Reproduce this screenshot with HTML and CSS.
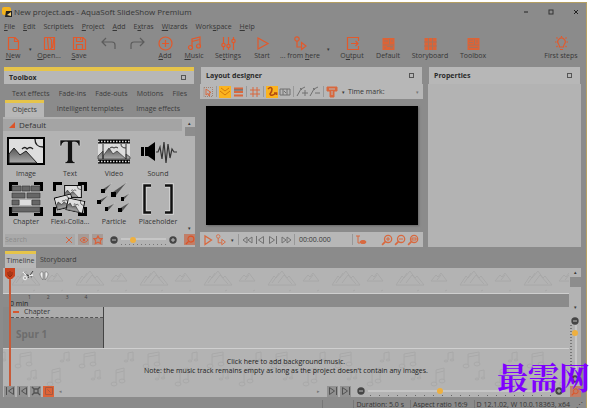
FILE: index.html
```html
<!DOCTYPE html>
<html lang="en">
<head>
<meta charset="utf-8">
<title>New project.ads - AquaSoft SlideShow Premium</title>
<link rel="stylesheet" href="styles.css">
</head>
<body>
<svg class="defs" width="0" height="0" aria-hidden="true">
  <defs>
    <linearGradient id="hill" x1="0" y1="0" x2="0" y2="1"><stop offset="0" stop-color="#555"/><stop offset="1" stop-color="#aaa"/></linearGradient>
    <pattern id="mountains" width="64" height="26" patternUnits="userSpaceOnUse" patternTransform="translate(8 0)">
      <g fill="none" stroke="#a8a8a8">
        <path d="M1 17L7 8L9 10L15 3L20 10L22 8L29 17ZM5 15L12 5M11 15L17 7L25 16"/>
        <path d="M36 13L41 7L43 9L46 5L52 13ZM42 12L46 7" />
        <path d="M22 23l2-1M50 23l2-1"/>
      </g>
    </pattern>
    <pattern id="notes" width="64" height="48" patternUnits="userSpaceOnUse" patternTransform="translate(8 0)">
      <g fill="none" stroke="#a8a8a8">
        <path d="M9 16V5L20 3V14M9 8L20 6"/><ellipse cx="7" cy="17" rx="3" ry="2"/><ellipse cx="18" cy="15" rx="3" ry="2"/>
        <path d="M53 11V4L58 3V10"/><ellipse cx="51" cy="12" rx="2" ry="1"/><ellipse cx="57" cy="11" rx="2" ry="1"/>
        <path d="M20 29V22L25 21V28"/><ellipse cx="18" cy="30" rx="2" ry="1"/><ellipse cx="24" cy="29" rx="2" ry="1"/>
        <path d="M41 34V21L49 19V31M41 24L49 22"/><ellipse cx="39" cy="35" rx="3" ry="2"/><ellipse cx="47" cy="32" rx="3" ry="2"/>
      </g>
    </pattern>
    <symbol id="photo" viewBox="0 0 38 28">
      <rect x="1" y="1" width="36" height="26" fill="#dedede" stroke="#000" stroke-width="2"/>
      <path d="M2 17L7 11L13 18L19 14L30 26H2Z" fill="url(#hill)" stroke="#222"/>
      <path d="M15 12q3-3 5 0q3-3 6 0M28 2q0 8 8 8" fill="none" stroke="#222" stroke-width="1.3"/>
    </symbol>
    <symbol id="corners" viewBox="0 0 34 34"><path d="M1.500 9V1.500H9M25 1.500H32.500V9M32.500 25V32.500H25M9 32.500H1.500V25" fill="none" stroke="#000" stroke-width="3"/></symbol>
    <symbol id="minus" viewBox="0 0 8 8"><circle cx="4" cy="4" r="3.700" fill="#454545"/><path d="M2 4H6" stroke="#bbb"/></symbol>
    <symbol id="plus" viewBox="0 0 8 8"><circle cx="4" cy="4" r="3.700" fill="#454545"/><path d="M2 4H6M4 2V6" stroke="#bbb"/></symbol>
    <symbol id="lens" viewBox="0 0 11 11"><circle cx="6.500" cy="4.500" r="3.300" fill="none" stroke="currentColor" stroke-width="1.200"/><path d="M4 7L1 10" stroke="currentColor" stroke-width="1.500"/></symbol>
    <symbol id="prev" viewBox="0 0 10 10"><path d="M1.500 1V9M8.500 1.500V8.500L3.500 5Z" fill="none" stroke="currentColor"/></symbol>
    <symbol id="next" viewBox="0 0 10 10"><path d="M8.500 1V9M1.500 1.500V8.500L6.500 5Z" fill="none" stroke="currentColor"/></symbol>
    <symbol id="branch" viewBox="0 0 15 15"><circle cx="4" cy="3" r="2.200" fill="none" stroke="currentColor"/><path d="M4 5V11H8M8.500 6.500V13.500L13 10Z" fill="none" stroke="currentColor" stroke-width="1.200"/></symbol>
  </defs>
</svg>

<div class="window">
  <header class="titlebar">
    <svg class="logo" viewBox="0 0 10 10"><rect width="9" height="8" rx="2" fill="#f4b31c"/><path d="M4 4H10V10H3Z" fill="#222"/><path d="M5 8L9 5V9Z" fill="#f4d27a"/></svg>
    <h1>New project.ads - AquaSoft SlideShow Premium</h1>
    <div class="wincontrols">
      <button aria-label="Minimize"><svg viewBox="0 0 8 8"><path d="M2 4H6" stroke="#222"/></svg></button>
      <button aria-label="Maximize"><svg viewBox="0 0 8 8"><rect x="2" y="2" width="4" height="4" fill="none" stroke="#333"/></svg></button>
      <button aria-label="Close"><svg viewBox="0 0 8 8"><path d="M2 2L6 6M6 2L2 6" stroke="#222"/></svg></button>
    </div>
  </header>

  <nav class="menu">
    <button><u>F</u>ile</button><button><u>E</u>dit</button><button>Scriptlets</button><button><u>P</u>roject</button><button><u>A</u>dd</button><button>E<u>x</u>tras</button><button><u>W</u>izards</button><button>Work<u>s</u>pace</button><button><u>H</u>elp</button>
  </nav>

  <div class="toolbar">
    <button><svg viewBox="0 0 15 15"><path d="M2.500 1.500H9L12.500 5V13.500H2.500ZM8.500 1.500V5.500H12.500"/></svg><span><u>N</u>ew</span></button>
    <button class="drop" aria-label="New options">▾</button>
    <button><svg viewBox="0 0 15 15"><path d="M2.500 1.500H12.500V13.500H9M2.500 1.500V13.500H8L9.500 12V4L7.500 1.500M5.500 2L6.500 13M12 2L10.500 12"/></svg><span><u>O</u>pen...</span></button>
    <button><svg viewBox="0 0 15 15"><path d="M1.500 1.500H11L13.500 4V13.500H1.500ZM4.500 1.500V5.500H10.500V1.500M4.500 13.500V8.500H10.500V13.500M8.500 2V4"/></svg><span><u>S</u>ave</span></button>
    <button class="grey" aria-label="Undo"><svg viewBox="0 0 15 15"><path d="M5 2L1 6L5 10M1 6H11Q14 6 14 9V13"/></svg><span></span></button>
    <button class="grey" aria-label="Redo"><svg viewBox="0 0 15 15"><path d="M10 2L14 6L10 10M14 6H4Q1 6 1 9V13"/></svg><span></span></button>
    <button><svg viewBox="0 0 15 15"><circle cx="7.500" cy="7.500" r="6.500"/><path d="M4 7.500H11M7.500 4V11"/></svg><span><u>A</u>dd</span></button>
    <button><svg viewBox="0 0 15 15"><path d="M5 11V3L13 1V9.500M5 5.500L13 3.500"/><circle cx="3.500" cy="11.500" r="2"/><circle cx="11.500" cy="10" r="2"/></svg><span><u>M</u>usic</span></button>
    <button><svg viewBox="0 0 15 15"><path d="M2.500 1V7M2.500 11V14M7.500 1V8M7.500 12V14M12.500 1V3M12.500 7V14"/><circle cx="2.500" cy="9" r="1.700"/><circle cx="7.500" cy="10" r="1.700"/><circle cx="12.500" cy="5" r="1.700"/></svg><span>Se<u>t</u>tings</span></button>
    <button><svg viewBox="0 0 15 15"><path d="M3 2V13L13 7.500Z"/></svg><span>Start</span></button>
    <button><svg viewBox="0 0 15 15"><use href="#branch"/></svg><span>... from <u>h</u>ere</span></button>
    <button class="drop" aria-label="Start options">▾</button>
    <button><svg viewBox="0 0 15 15"><path d="M13.500 5V1.500H2.500V13.500H13.500V10M6 7.500H13M10.500 5L13 7.500L10.500 10"/></svg><span>O<u>u</u>tput</span></button>
    <button><svg viewBox="0 0 15 15"><path class="solid" d="M1.500 2H13.500V14H1.500Z"/><path class="cut" d="M2 9H13M6 10.500H12M8.500 3V8M3 5H7M10 5H12M4 11V13M9 12H12"/></svg><span>Default</span></button>
    <button><svg viewBox="0 0 15 15"><path class="solid" d="M1.500 2H13.500V14H1.500Z"/><path class="cut" d="M5.500 2V14M9.500 2V14M1 6H14M1 10H14"/></svg><span>Storyboard</span></button>
    <button><svg viewBox="0 0 15 15"><path class="solid" d="M1.500 2H13.500V14H1.500Z"/><path class="cut" d="M8.500 3V9H13M3 4H7M3 6.500H7M2 9H8M3 11.500H12M11 4V7"/></svg><span>Toolbox</span></button>
    <i></i>
    <button><svg viewBox="0 0 15 15"><path d="M5.500 11Q5.500 9.500 4.500 8A3.700 3.700 0 1 1 10.500 8Q9.500 9.500 9.500 11ZM6 13.500H9M7.500 0V1M1 6H2.500M12.500 6H14M2.500 1.500L3.500 2.500M12.500 1.500L11.500 2.500M2.500 11L3.500 10M12.500 11L11.500 10"/></svg><span>First steps</span></button>
  </div>

  <main class="dock">
    <section class="panel toolbox">
      <header class="panelhead active"><h2>Toolbox</h2><button class="float" aria-label="Float toolbox"></button></header>
      <div class="tabs upper"><button>Text effects</button><button>Fade-ins</button><button>Fade-outs</button><button>Motions</button><button>Files</button></div>
      <div class="tabs lower"><button class="current">Objects</button><button>Intelligent templates</button><button>Image effects</button></div>
      <div class="library">
        <div class="objects">
          <h3><svg viewBox="0 0 6 6"><path d="M6 0V6H0Z" fill="#dc5327"/></svg>Default</h3>
          <div class="grid">
            <button><svg viewBox="0 0 38 34"><use href="#photo" y="3" width="38" height="28"/></svg>Image</button>
            <button><svg viewBox="0 0 38 34"><path d="M9 6H29V12H27.500Q27 8 24 8H21.500V26Q21.500 28 24 28V29.500H14V28Q16.500 28 16.500 26V8H14Q11 8 10.500 12H9Z" fill="#111" stroke="#d0d0d0" stroke-width=".6"/></svg>Text</button>
            <button><svg viewBox="0 0 38 34"><rect x="3" y="6" width="32" height="23" fill="#ddd"/><path d="M3 7.500H35M3 27.500H35" stroke="#000" stroke-width="4"/><path d="M3 7.500H35M3 27.500H35" stroke="#ddd" stroke-width="1.500" stroke-dasharray="1.500 1.500"/><path d="M3 22L8 17V25H3ZM8 22L14 14L18 20L22 17L31 25H8ZM31 20L35 23V25H31Z" fill="url(#hill)" stroke="#333" stroke-width=".7"/><path d="M8 10V25M31 10V25M15 14q2-2 4 0q2-2 4 0M26 10q0 4 5 4" fill="none" stroke="#333"/></svg>Video</button>
            <button><svg viewBox="0 0 38 34"><path d="M2 13H5V22H2ZM6 13H9L16 8V27L9 22H6Z" fill="#000"/><path d="M17 18H19L21 13L23 25L25 8L27 29L29 10L31 24L33 15L35 18H38" fill="none" stroke="#333" stroke-width="1.200"/></svg>Sound</button>
            <button><svg viewBox="0 0 38 34"><use href="#corners" x="2" width="34" height="34"/><path d="M5 4H14V9H5ZM15 4H23V9H15ZM24 4H33V9H24ZM5 11H18V16H5ZM20 11H33V16H20ZM5 18H12V23H5ZM25 18H33V23H25ZM5 25H33V30H5Z" fill="#666" stroke="#333" stroke-width=".6"/><path d="M13 18H24V23H13Z" fill="#ddd"/></svg>Chapter</button>
            <button><svg viewBox="0 0 38 34"><use href="#corners" x="2" width="34" height="34"/><use href="#photo" x="13" y="3" width="18" height="13"/><use href="#photo" x="4" y="13" width="18" height="14" transform="rotate(-14 13 20)"/><use href="#photo" x="15" y="17" width="19" height="13" transform="rotate(12 24 23)"/></svg>Flexi-Colla...</button>
            <button><svg viewBox="0 0 38 34"><g fill="#555" stroke="#ccc" stroke-width=".5"><path d="M17 1L6 8L9 11ZM32 0L16 11L20 15ZM14 13L2 19L5 22ZM35 11L26 16L28 19ZM20 21L10 26L13 29ZM35 20L23 27L27 30Z"/></g><path d="M6 7H10V11H6ZM16 10H21V15H16ZM2 18H6V22H2ZM26 15H29V19H26ZM10 25H13V29H10ZM23 26H27V30H23Z" fill="#000"/></svg>Particle</button>
            <button><svg viewBox="0 0 38 34"><path d="M12 3.500H5.500V30.500H12M26 3.500H32.500V30.500H26" fill="none" stroke="#d8d8d8" stroke-width="4.500"/><path d="M12 3.500H5.500V30.500H12M26 3.500H32.500V30.500H26" fill="none" stroke="#111" stroke-width="2.500"/></svg>Placeholder</button>
          </div>
        </div>
        <div class="scroll"><span>▴</span><b></b><span class="end">▾</span></div>
      </div>
      <div class="searchbar">
        <label class="search"><input type="text" placeholder="Search" aria-label="Search objects"><svg viewBox="0 0 8 8"><path d="M1 1L7 7M7 1L1 7" stroke="#d8623c"/></svg></label>
        <button class="tile" aria-label="Show"><svg viewBox="0 0 11 11"><path d="M1 5.500Q5.500 0 10 5.500Q5.500 11 1 5.500Z" fill="none" stroke="#d8623c"/><circle cx="5.500" cy="5.500" r="1.500" fill="#d8623c"/></svg></button>
        <button class="tile" aria-label="Favourites"><svg viewBox="0 0 11 11"><path d="M5.500 1L7 4H10L8 6.500L8.500 9.500L5.500 8L2.500 9.500L3 6.500L1 4H4Z" fill="none" stroke="#d8623c" stroke-width="1.300"/></svg></button>
        <div class="zoomer"><svg><use href="#minus"/></svg><input type="range" aria-label="Icon size" min="0" max="100" value="22"><svg><use href="#plus"/></svg></div>
        <button class="tile hot" aria-label="Reset icon size"><svg viewBox="0 0 11 11"><use href="#lens"/></svg></button>
      </div>
    </section>

    <section class="panel designer">
      <header class="panelhead"><h2>Layout designer</h2><button class="float" aria-label="Float layout designer"></button></header>
      <div class="strip">
        <button aria-label="Select"><svg viewBox="0 0 12 12"><path d="M2 1.500H10.500V10.500H2Z" stroke="#a08070" stroke-dasharray="1 1"/><path d="M4 3V9L6 7.500L7 10L8 9L7 7L9 6.500Z"/></svg></button>
        <hr>
        <button class="on" aria-label="Keyframes"><svg viewBox="0 0 12 12"><path d="M2 2L6 5L10 2M1 5L6 9L11 5" stroke="#d57b0b"/></svg></button>
        <button aria-label="Layers"><svg viewBox="0 0 12 12"><path d="M2 2.500H11M2 6H11M2 9.500H11" stroke-width="2"/><path d="M2 4H11" stroke="#555"/></svg></button>
        <hr>
        <button aria-label="Grid"><svg viewBox="0 0 12 12"><path d="M4 1V11M8 1V11M1 4H11M1 8H11"/></svg></button>
        <hr>
        <button class="on" aria-label="Motion path"><svg viewBox="0 0 12 12"><path d="M2 3Q5 0 6 3Q6 6 4 8Q5 11 10 7M8 7H10.500V9" stroke="#b34c10" stroke-width="1.600"/></svg></button>
        <button class="dim" aria-label="Camera"><svg viewBox="0 0 12 12"><path d="M1 3H11V9H1ZM4 3V9M8 3V9M5 5L7 7"/></svg></button>
        <hr>
        <button class="dim" aria-label="Add point"><svg viewBox="0 0 12 12"><path d="M1 10L5 3L9 1M4 2L6 4M6 7H12M9 4V10"/></svg></button>
        <button class="dim" aria-label="Remove point"><svg viewBox="0 0 12 12"><path d="M1 10L5 3L9 1M4 2L6 4M6 7H11"/></svg></button>
        <hr>
        <button aria-label="Align"><svg viewBox="0 0 12 12"><path d="M1 1H11V5H8V11H4V5H1Z" fill="#d8693f"/><path d="M3 3H9M6 5V9" stroke="#b9b9b9"/></svg></button>
        <button class="drop" aria-label="Align options">▾</button>
        <span class="mark">Time mark:</span>
        <button class="drop faint push" aria-label="Time mark options">▾</button>
      </div>
      <div class="stage"></div>
      <div class="strip transport">
        <button aria-label="Play"><svg viewBox="0 0 12 12"><path d="M3 2V10.500L9.500 6Z" stroke-width="1.300"/></svg></button>
        <button aria-label="Play from here"><svg viewBox="0 0 12 12"><use href="#branch"/></svg></button>
        <button class="drop" aria-label="Play options">▾</button>
        <hr>
        <button class="dim" aria-label="Rewind"><svg viewBox="0 0 12 12"><path d="M6 3V9L2 6ZM11 3V9L7 6Z"/></svg></button>
        <button class="dim" aria-label="Previous"><svg viewBox="0 0 12 12"><use href="#prev" x="1" y="1" width="10" height="10"/></svg></button>
        <button class="dim" aria-label="Next"><svg viewBox="0 0 12 12"><use href="#next" x="1" y="1" width="10" height="10"/></svg></button>
        <button class="dim" aria-label="Forward"><svg viewBox="0 0 12 12"><path d="M2 3V9L6 6ZM7 3V9L11 6Z"/></svg></button>
        <hr>
        <span class="time">00:00.000</span>
        <hr class="push">
        <button class="eye" aria-label="Preview"><svg viewBox="0 0 12 12"><path d="M1 2H5M3 2V9H5"/><ellipse cx="8" cy="8" rx="3" ry="1.500" fill="#d8693f"/></svg></button>
        <button aria-label="Zoom in"><svg viewBox="0 0 12 12"><use href="#lens"/><path d="M5 5H9M7 3V7"/></svg></button>
        <button aria-label="Zoom out"><svg viewBox="0 0 12 12"><use href="#lens"/><path d="M5 5H9"/></svg></button>
        <button aria-label="Zoom to fit"><svg viewBox="0 0 12 12"><use href="#lens"/><path d="M5 4H9V6H5Z"/></svg></button>
      </div>
    </section>

    <section class="panel properties">
      <header class="panelhead"><h2>Properties</h2><button class="float" aria-label="Float properties"></button></header>
      <div class="fill"></div>
    </section>
  </main>

  <section class="timeline">
    <div class="tabs base"><button class="current">Timeline</button><button>Storyboard</button></div>
    <div class="tracks">
      <div class="lanes">
        <div class="lane images">
          <svg class="backdrop"><rect width="100%" height="100%" fill="url(#mountains)"/></svg>
          <button aria-label="Cut"><svg viewBox="0 0 12 12"><path d="M1 3L10 7M6 8L11 1M2 2L6 6" stroke="#444"/><circle cx="3" cy="8" r="1.800" stroke="#eee" fill="none"/><path d="M1 2L4 5M7 6L11 5" stroke="#eee" stroke-width="1.500"/></svg></button>
          <button aria-label="Split"><svg viewBox="0 0 12 12"><path d="M5 2Q2 1 2 5Q3 8 5 10ZM7 2Q10 1 10 5Q9 8 7 10Z" fill="#eee" stroke="#666" stroke-width=".6"/></svg></button>
        </div>
        <div class="ruler"><div class="ticks"><span>1</span><span>2</span><span>3</span><span>4</span></div><div>0 min</div></div>
        <div class="lane chapters">
          <article class="chapter"><h4><i></i>Chapter</h4><p>Spur 1</p></article>
        </div>
        <div class="lane music">
          <svg class="backdrop"><rect width="100%" height="100%" fill="url(#notes)"/></svg>
          <p>Click here to add background music.<br>Note: the music track remains empty as long as the project doesn't contain any images.</p>
          <div class="nav">
            <button class="tile" aria-label="To start"><svg viewBox="0 0 10 10"><use href="#prev"/></svg></button>
            <button class="tile" aria-label="Back"><svg viewBox="0 0 10 10"><use href="#prev"/></svg></button>
            <button class="tile" aria-label="Fit"><svg viewBox="0 0 10 10"><path d="M3 3H7V7H3ZM1 1L3 3M9 1L7 3M1 9L3 7M9 9L7 7" fill="none" stroke="currentColor" stroke-width="1.300"/></svg></button>
            <button class="tile vivid" aria-label="Follow"><svg viewBox="0 0 10 10"><path d="M1.500 1.500H8.500V8.500H1.500ZM3.500 3.500L6.500 6.500" fill="none" stroke="#a8583e"/></svg></button>
            <small>◂</small><small class="push">▸</small>
            <button class="tile" aria-label="Forward"><svg viewBox="0 0 10 10"><use href="#next"/></svg></button>
            <button class="tile" aria-label="To end"><svg viewBox="0 0 10 10"><use href="#next"/></svg></button>
            <div class="zoomer wide"><svg><use href="#minus"/></svg><input type="range" aria-label="Timeline zoom" min="0" max="100" value="39"><svg><use href="#plus"/></svg></div>
          </div>
        </div>
        <svg class="playhead" viewBox="0 0 12 118" aria-hidden="true"><path d="M1 0H11V8L8 11H4L1 8Z" fill="#c9431e"/><path d="M4 4V7L6 9L8 7V4M6 3V9" stroke="#8c2c10" fill="none"/><path d="M6 11V118" stroke="#c85a38" stroke-width="2"/></svg>
      </div>
      <div class="side">
        <span>▴</span><b></b><span class="down">▾</span>
        <svg><use href="#minus"/></svg>
        <input class="vertical" type="range" aria-label="Track height" min="0" max="100" value="14">
        <svg><use href="#plus"/></svg>
        <button class="tile hot" aria-label="Reset zoom"><svg viewBox="0 0 11 11"><use href="#lens"/></svg></button>
      </div>
    </div>
  </section>

  <footer class="status"><span></span><span>Duration: 5.0 s</span><span>Aspect ratio 16:9</span><span>D 12.1.02, W 10.0.18363, x64</span><em>⋰</em></footer>
</div>
<div class="watermark" lang="zh">最需网</div>
</body>
</html>
```

FILE: styles.css
```css
* { box-sizing: border-box; }
body {
  margin: 0;
  height: 100vh;
  padding: 2px 22px 0 0;
  overflow: hidden;
  position: relative;
  background: #fff;
  color: #363636;
  font: 7px/10px "Open Sans", "Noto Sans", sans-serif;
}
.defs { position: absolute; }
h1, h2, h3, h4, p, hr { margin: 0; font: inherit; }
button { border: 0; padding: 0; background: none; color: inherit; font: inherit; white-space: nowrap; }
svg { display: block; }
u { text-underline-offset: 1px; }
.push { margin-left: auto; }

.window { background: #8b8b8b; border-top: 1px solid #b59f62; border-right: 1px solid #b59f62; }

.titlebar { display: flex; align-items: center; height: 17px; padding: 0 6px 0 2px; gap: 2px; }
.logo { width: 10px; height: 10px; }
.titlebar h1 { flex: 1; font-size: 8px; }
.wincontrols { display: flex; gap: 17px; }
.wincontrols svg { width: 8px; height: 8px; }

.menu { display: flex; gap: 8px; height: 14px; padding-left: 4px; align-items: center; }

.toolbar {
  display: grid;
  grid-template-columns: 26px 6px 34px 26px 32px 26px 30px 28px 40px 28px 48px 10px 36px 36px 48px 38px 1fr 50px;
  height: 33px;
  padding-top: 2px;
}
.toolbar button { display: flex; flex-direction: column; align-items: center; }
.toolbar svg { width: 15px; height: 15px; fill: none; stroke: #e2592b; color: #e2592b; stroke-width: 1.2; }
.toolbar .solid { fill: #dd6336; stroke: none; }
.toolbar .cut { stroke: #a3745f; stroke-width: 1; }
.toolbar .grey svg { stroke: #5c5c5c; }
.toolbar .drop { justify-content: center; padding-bottom: 6px; }
.drop { font-size: 5px; width: 8px; }
.faint { color: #777; }

.dock { display: grid; grid-template-columns: 192px 1fr 153px; gap: 5px; padding: 0 5px 0 3px; height: 180px; }
.panel { display: flex; flex-direction: column; min-width: 0; }
.panelhead { display: flex; justify-content: space-between; align-items: center; height: 17px; margin: 0 1px; padding: 0 8px 0 5px; background: #b7b7b7; }
.panelhead h2 { font-weight: 700; color: #2a2a2a; }
.panelhead.active { border-top: 4px solid #e6c44a; }
.float { width: 5px; height: 5px; border: 1px solid #555; }

.tabs { display: flex; color: #3c3c3c; }
.tabs .current { background: #b7b7b7; border-top: 3px solid #e6c44a; }
.upper { height: 16px; padding: 3px 8px 0 9px; justify-content: space-between; }
.lower { height: 17px; padding: 0 15px 0 2px; justify-content: space-between; }
.lower .current { width: 39px; }

.library { display: flex; background: #b3b3b3; height: 115px; padding-top: 2px; }
.objects { flex: 1; }
.objects h3 { display: flex; align-items: center; gap: 4px; height: 12px; padding-left: 6px; margin-right: 2px; background: #a4a4a4; font-size: 8px; }
.objects h3 svg { width: 6px; height: 6px; }
.grid { display: grid; grid-template-columns: repeat(4, 44px); grid-auto-rows: 48px; padding: 2px 0 0 1px; }
.grid button { display: flex; flex-direction: column; align-items: center; gap: 1px; }
.grid svg { width: 38px; height: 34px; margin-top: 1px; }
.scroll { display: flex; flex-direction: column; align-items: center; width: 11px; font-size: 5px; line-height: 8px; }
.scroll b { width: 10px; height: 9px; background: #8d8d8d; }
.scroll .end { margin-top: auto; }

.searchbar { display: flex; align-items: center; gap: 3px; height: 15px; padding-left: 2px; background: #b3b3b3; }
.search { display: flex; align-items: center; width: 70px; height: 11px; padding-right: 2px; background: #a9a9a9; }
.search input { flex: 1; min-width: 0; padding: 0; border: 0; background: none; font: inherit; }
.search input::placeholder { color: #8c8c8c; }
.search svg { width: 8px; height: 8px; }
.tile { display: grid; place-items: center; flex: none; width: 11px; height: 11px; background: #919191; color: #525252; }
.searchbar .tile { background: #a79b96; }
.tile svg { width: 10px; height: 10px; }
.tile.hot, .searchbar .hot { background: #c17e67; color: #dc5327; }
.tile.vivid { background: #dd6337; }
.zoomer { flex: 1; min-width: 0; display: flex; align-items: center; gap: 3px; padding: 0 4px; }
.zoomer svg { flex: none; width: 8px; height: 8px; }
input[type="range"] {
  appearance: none;
  flex: 1;
  min-width: 0;
  height: 11px;
  margin: 0;
  background:
    linear-gradient(#c6c6c6, #c6c6c6) 0 4px / 100% 2px no-repeat,
    repeating-linear-gradient(90deg, #777 0 1px, transparent 1px 4px) 0 10px / 100% 1px no-repeat;
}
.wide input[type="range"] {
  background:
    linear-gradient(#c6c6c6, #c6c6c6) 0 4px / 100% 2px no-repeat,
    repeating-linear-gradient(90deg, #666 0 1px, transparent 1px 9px) 2px 9px / 100% 1px no-repeat;
}
input[type="range"]::-webkit-slider-thumb { appearance: none; width: 6px; height: 6px; border-radius: 50%; background: #eeb040; }

.strip { display: flex; align-items: center; gap: 1px; height: 15px; padding: 0 2px; background: #b7b7b7; }
.strip svg { width: 12px; height: 12px; fill: none; stroke: #d8693f; color: #d8693f; }
.strip .dim svg { stroke: #707070; color: #707070; }
.strip .on { background: #fbb31e; }
.strip hr { width: 1px; height: 11px; border: 0; margin-inline: 1px; background: #989898; }
.strip .push { margin-left: auto; }
.stage { flex: 1; margin: 7px 5px 7px 6px; background: #000; box-shadow: 1px 1px 2px #666; }
.transport { padding-right: 4px; }
.transport .time { margin-left: 2px; }
.transport .eye { margin-right: 13px; }
.fill { flex: 1; background: #b3b3b3; }

.timeline { padding: 4px 5px 0 3px; }
.base { height: 17px; padding-left: 2px; gap: 4px; }
.base .current { width: 31px; }
.tracks { display: grid; grid-template-columns: 1fr 12px; height: 129px; background: #b3b3b3; }
.lanes { position: relative; display: flex; flex-direction: column; min-width: 0; }
.lane { position: relative; }
.backdrop { position: absolute; inset: 0; width: 100%; height: 100%; }
.images { display: flex; gap: 4px; height: 26px; padding: 2px 0 0 19px; border-bottom: 1px solid #cfcfcf; }
.images button { position: relative; width: 12px; height: 12px; }
.ruler { height: 13px; padding-left: 7px; background: #8b8b8b; line-height: 7px; color: #222; }
.ticks { display: flex; gap: 16px; height: 6px; padding-left: 18px; font-size: 5px; line-height: 6px; color: #444; }
.chapters { height: 42px; border-bottom: 1px solid #cfcfcf; }
.chapter { width: 101px; height: 41px; padding-left: 8px; background: #888; border-right: 1px solid #444; }
.chapter h4 { display: flex; align-items: center; gap: 5px; padding-left: 2px; background: #acacac; border-bottom: 1px dashed #555; }
.chapter h4 i { width: 6px; height: 2px; background: #d35730; }
.chapter p { padding: 9px 5px; font-size: 10px; line-height: 14px; font-weight: 700; color: #6d6d6d; }
.music { flex: 1; display: flex; flex-direction: column; justify-content: space-between; padding-top: 8px; }
.music p { position: relative; text-align: center; line-height: 9px; color: #222; }
.nav { position: relative; display: flex; align-items: center; gap: 2px; padding: 0 2px 0 1px; height: 12px; }
.nav small { font-size: 5px; color: #777; margin-left: 3px; }
.nav .push { margin: 0 5px 0 auto; }
.wide { flex: 0 0 38%; }
.playhead { position: absolute; left: 1px; top: 0; width: 12px; height: 118px; }
.side { display: flex; flex-direction: column; align-items: center; font-size: 5px; line-height: 9px; }
.side b { width: 11px; height: 10px; background: #8d8d8d; }
.side .down { margin-top: 16px; }
.side svg { flex: none; width: 8px; height: 8px; margin-top: 5px; }
.side .vertical {
  writing-mode: vertical-lr;
  width: 11px;
  min-height: 0;
  background:
    linear-gradient(#c6c6c6, #c6c6c6) 5px 0 / 2px 100% no-repeat,
    repeating-linear-gradient(#777 0 1px, transparent 1px 3px) 0 0 / 2px 100% no-repeat;
}
.side .tile { margin-top: 3px; }
.side .tile svg { margin: 0; }

.status { display: flex; justify-content: flex-end; height: 12px; padding: 3px 3px 0 0; }
.status span { padding: 0 6px 0 2px; border-left: 1px solid #777; white-space: nowrap; }
.status span:first-child { width: 31px; }
.status em { font-style: normal; }

.watermark {
  position: absolute;
  right: 19px;
  bottom: 15px;
  color: #7f00ff;
  font: 700 31px/34px "Noto Serif CJK SC", "Noto Sans CJK SC", serif;
}
```
